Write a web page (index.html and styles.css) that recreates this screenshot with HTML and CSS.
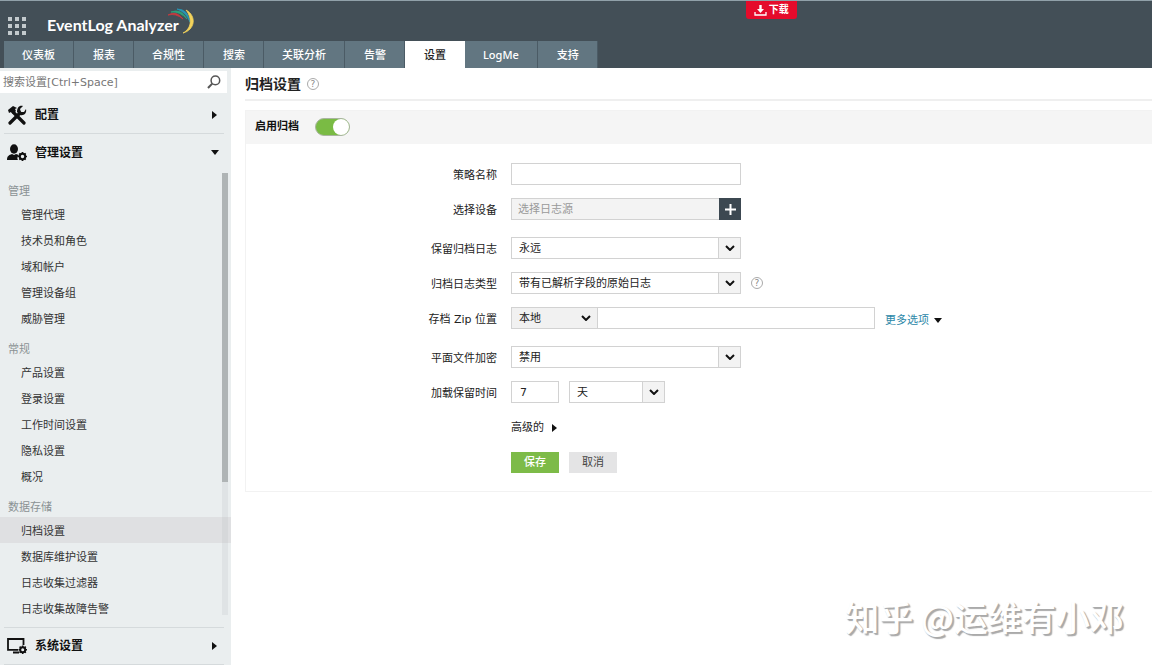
FILE: index.html
```html
<!DOCTYPE html>
<html lang="zh-CN">
<head>
<meta charset="utf-8">
<meta name="viewport" content="width=device-width, initial-scale=1">
<title>EventLog Analyzer - 归档设置</title>
<link rel="stylesheet" href="styles.css">
</head>
<body>
<header class="topbar">
  <div class="brand-row">
    <button class="apps" type="button" aria-label="Apps">
      <svg width="18" height="18" viewBox="0 0 18 18" fill="#c3cacd"><path d="M0 0h4v4H0zM7 0h4v4H7zM14 0h4v4h-4zM0 7h4v4H0zM7 7h4v4H7zM14 7h4v4h-4zM0 14h4v4H0zM7 14h4v4H7zM14 14h4v4h-4z"/></svg>
    </button>
    <a class="brand" href="#">EventLog Analyzer</a>
    <svg class="swoosh" width="30" height="28" viewBox="0 0 30 28" fill="none">
      <path d="M2 8Q10 3 17 12Q10 6 2 8Z" fill="#c93a3f" stroke="#c93a3f" stroke-width=".8"/>
      <path d="M5 5Q15 1 21 12Q14 4 5 5Z" fill="#2ba37c" stroke="#2ba37c" stroke-width=".8"/>
      <path d="M11 2Q22 2 24 15Q20 5 11 2Z" fill="#2795b5" stroke="#2795b5" stroke-width=".8"/>
      <path d="M20 3C31 9 29 23 17 26C25 22 27 12 20 3Z" fill="#f3d35b" stroke="#f3d35b" stroke-width=".8"/>
    </svg>
  </div>
  <nav class="tabs">
    <a class="long" href="#">仪表板</a><a href="#">报表</a><a class="long" href="#">合规性</a><a href="#">搜索</a><a class="long" href="#">关联分析</a><a href="#">告警</a><a class="current" href="#">设置</a><a class="long" href="#">LogMe</a><a href="#">支持</a>
  </nav>
  <button class="download" type="button">
    <svg width="13" height="11" viewBox="0 0 13 11" fill="none" stroke="#fff"><path d="M6.5 0v5" stroke-width="2.4"/><path d="M3 4h7L6.500 8z" fill="#fff" stroke="none"/><path d="M1 7v3h11V7" stroke-width="1.300"/></svg>下载
  </button>
</header>

<div class="page">
  <aside class="sidebar">
    <div class="search">
      <input type="search" placeholder="搜索设置[Ctrl+Space]" aria-label="搜索设置">
      <button type="button" aria-label="搜索"><svg width="14" height="14" viewBox="0 0 14 14" fill="none" stroke="#555"><circle cx="8.400" cy="5.400" r="4.300" stroke-width="1.500"/><path d="M5.200 8.600L1 13" stroke-width="2"/></svg></button>
    </div>
    <button class="section first" type="button">
      <svg width="20" height="20" viewBox="0 0 20 20" fill="none" stroke="#111"><path d="M6 7L17 18" stroke-width="3.200" stroke-linecap="round"/><path d="M1 5L6 1L10 3L8 4L9 6L6 9L4 7L2 8Z" fill="#111" stroke="none"/><path d="M3 18L13 8" stroke-width="3.200" stroke-linecap="round"/><path d="M16 1L13 4L14 7L17 7L19 4C20 8 17 11 13 10L10 7C10 3 12 0 16 1Z" fill="#111" stroke="none"/></svg>
      <span>配置</span><i class="tri right"></i>
    </button>
    <button class="section open" type="button">
      <svg width="20" height="18" viewBox="0 0 20 18" fill="#111"><ellipse cx="7" cy="5" rx="4" ry="4.700"/><path d="M0 16C0 12 2 11 5 10L7 11L9 10L12 11C10 13 10 15 11 16Z"/><circle cx="15.500" cy="12.500" r="2.700" fill="none" stroke="#111" stroke-width="2"/><path d="M15.500 8v2M15.500 15v2M11 12.500h2M18 12.500h2M12.300 9.300l1.400 1.400M17.300 14.300l1.400 1.400M18.700 9.300l-1.400 1.400M13.700 14.300l-1.400 1.400" stroke="#111" stroke-width="1.700"/></svg>
      <span>管理设置</span><i class="tri down"></i>
    </button>
    <nav class="menu">
      <h3>管理</h3>
      <a href="#">管理代理</a><a href="#">技术员和角色</a><a href="#">域和帐户</a><a href="#">管理设备组</a><a href="#">威胁管理</a>
      <h3>常规</h3>
      <a href="#">产品设置</a><a href="#">登录设置</a><a href="#">工作时间设置</a><a href="#">隐私设置</a><a href="#">概况</a>
      <h3>数据存储</h3>
      <a class="current" href="#">归档设置</a><a href="#">数据库维护设置</a><a href="#">日志收集过滤器</a><a href="#">日志收集故障告警</a>
      <div class="track"><div class="thumb"></div></div>
    </nav>
    <button class="section last" type="button">
      <svg width="20" height="18" viewBox="0 0 20 18" fill="none" stroke="#111"><path d="M11 12.800H1V2h15.500v6" stroke-width="1.800"/><path d="M6 15.500h6" stroke-width="2"/><circle cx="15.700" cy="12.700" r="2.500" stroke-width="2"/><path d="M15.700 8.500v2M15.700 15v2M11.500 12.700h2M18 12.700h2M12.600 9.600l1.400 1.400M17.400 14.400l1.400 1.400M18.800 9.600l-1.400 1.400M14 14.400l-1.400 1.400" stroke-width="1.600"/></svg>
      <span>系统设置</span><i class="tri right"></i>
    </button>
  </aside>

  <main class="content">
    <div class="heading">
      <h1>归档设置</h1>
      <button class="help" type="button" aria-label="帮助">?</button>
    </div>
    <section class="panel">
      <div class="panel-head">
        <label for="enable">启用归档</label>
        <input class="switch" id="enable" type="checkbox" checked>
      </div>
      <form class="form">
        <div class="row"><label for="policy">策略名称</label><input class="box wide" id="policy" type="text"></div>
        <div class="row spaced"><label for="device">选择设备</label>
          <div class="picker wide"><input id="device" type="text" placeholder="选择日志源" readonly><button type="button" aria-label="添加"><svg width="11" height="11" viewBox="0 0 11 11" stroke="#fff" stroke-width="2"><path d="M5.500 0v11M0 5.500h11"/></svg></button></div></div>
        <div class="row"><label for="keep">保留归档日志</label>
          <div class="pick wide"><select id="keep"><option>永远</option></select><span class="arrow"><svg width="10" height="6" viewBox="0 0 10 6"><path d="M1 1l4 4 4-4"/></svg></span></div></div>
        <div class="row"><label for="type">归档日志类型</label>
          <div class="pick wide"><select id="type"><option>带有已解析字段的原始日志</option></select><span class="arrow"><svg width="10" height="6" viewBox="0 0 10 6"><path d="M1 1l4 4 4-4"/></svg></span></div>
          <button class="help" type="button" aria-label="帮助">?</button></div>
        <div class="row spaced"><label for="place">存档 Zip 位置</label>
          <div class="location"><div class="pick plain"><select id="place"><option>本地</option></select><span class="arrow"><svg width="10" height="6" viewBox="0 0 10 6"><path d="M1 1l4 4 4-4"/></svg></span></div><input class="box" type="text" aria-label="存档路径"></div>
          <a class="more" href="#">更多选项<i class="tri down"></i></a></div>
        <div class="row"><label for="crypt">平面文件加密</label>
          <div class="pick wide"><select id="crypt"><option>禁用</option></select><span class="arrow"><svg width="10" height="6" viewBox="0 0 10 6"><path d="M1 1l4 4 4-4"/></svg></span></div></div>
        <div class="row"><label for="time">加载保留时间</label>
          <input class="box number" id="time" type="text" value="7">
          <div class="pick unit"><select aria-label="单位"><option>天</option></select><span class="arrow"><svg width="10" height="6" viewBox="0 0 10 6"><path d="M1 1l4 4 4-4"/></svg></span></div></div>
        <div class="row"><span></span><button class="advanced" type="button">高级的<i class="tri right"></i></button></div>
        <div class="row"><span></span><button class="action save" type="submit">保存</button><button class="action" type="button">取消</button></div>
      </form>
    </section>
  </main>
</div>
<div class="watermark">知乎 @运维有小邓</div>
</body>
</html>
```

FILE: styles.css
```css
* { box-sizing: border-box; }

body {
  margin: 0;
  background: #fff;
  color: #222;
  font: 11px/16px "DejaVu Sans", "Noto Sans CJK SC", sans-serif;
}

button, input, select {
  margin: 0;
  padding: 0;
  border: 0;
  border-radius: 0;
  background: none;
  color: inherit;
  font: inherit;
}

a { color: inherit; text-decoration: none; }
svg { display: block; flex: none; }

.topbar {
  position: relative;
  background: #434f57;
  border-top: 1px solid #91a1a9;
}

.brand-row {
  display: flex;
  align-items: center;
  height: 40px;
  padding: 8px 8px 0;
}

.brand {
  margin-left: 21px;
  color: #fff;
  font: bold 16px/24px Lato, sans-serif;
}

.apps svg { margin-top: 2px; }

.swoosh { margin: -8px 0 0 -13px; }

.tabs { display: flex; padding-left: 4px; }

.tabs a {
  padding: 6px 18px 5px 19px;
  border-right: 1px solid #4b5b65;
  background: #627681;
  color: #fff;
  font-family: "Noto Sans", "Noto Sans CJK SC", sans-serif;
  font-weight: 500;
}

.tabs .long { padding-left: 18px; }

.tabs .current {
  background: #fff;
  border-color: #fff;
  color: #222;
}

.download {
  position: absolute;
  top: 0;
  left: 65%;
  display: flex;
  align-items: center;
  gap: 2px;
  height: 18px;
  margin-left: -3px;
  padding: 0 8px;
  border-radius: 0 0 3px 3px;
  background: #e50b2b;
  color: #fff;
  font-size: 10px;
  font-weight: bold;
}

.page { display: flex; align-items: stretch; }

.sidebar {
  flex: 0 0 231px;
  padding-top: 3px;
  background: #eaeeef;
}

.search {
  display: flex;
  align-items: center;
  height: 22px;
  margin-right: 4px;
  padding: 0 6px 0 3px;
  background: #fff;
}

.search input { flex: 1; min-width: 0; padding-top: 2px; outline: 0; }
.search input::placeholder { color: #777; opacity: 1; }

.section {
  display: flex;
  align-items: center;
  gap: 8px;
  width: 220px;
  height: 41px;
  margin-left: 4px;
  padding: 0 5px 0 3px;
  border-bottom: 1px solid #d5dadc;
  color: #111;
  font-size: 12px;
  font-weight: bold;
  text-align: left;
}

.section span { flex: 1; }
.section.first { padding-top: 3px; }
.section.open { height: 39px; padding-bottom: 2px; border: 0; }
.section.last { height: 38px; border-top: 1px solid #d5dadc; }

.tri { display: block; flex: none; width: 0; height: 0; border: solid transparent; }
.tri.right { border-width: 4px 0 4px 5px; border-left-color: #111; margin-right: 2px; }
.tri.down { border-width: 5px 4px 0; border-top-color: #111; }

.menu { position: relative; padding-bottom: 6px; color: #333; }

.menu h3 {
  margin: 0;
  padding: 11px 8px 1px;
  color: #8b9294;
  font-size: 11px;
  font-weight: normal;
}

.menu a { display: block; padding: 7px 21px 3px; }
.menu .current { background: #dfe0e2; }

.track {
  position: absolute;
  top: 0;
  right: 3px;
  bottom: 12px;
  width: 6px;
  background: rgba(180, 184, 188, 0.2);
}

.thumb { height: 70%; background: #afb4b5; }

.content { flex: 1; min-width: 0; padding-left: 14px; }

.heading {
  display: flex;
  align-items: center;
  gap: 6px;
  height: 33px;
  border-bottom: 2px solid #efefef;
}

h1 { margin: 0; color: #222; font-size: 14px; line-height: 20px; font-weight: bold; }

.help {
  width: 12px;
  height: 12px;
  border: 1px solid #aaa;
  border-radius: 50%;
  color: #888;
  font-size: 9px;
  line-height: 10px;
  text-align: center;
}

.panel {
  margin-top: 9px;
  border: 1px solid #f2f2f2;
  border-right: 0;
}

.panel-head {
  display: flex;
  align-items: center;
  gap: 16px;
  height: 33px;
  padding: 0 9px 2px;
  background: #f5f5f5;
  color: #111;
  font-weight: bold;
}

.switch {
  appearance: none;
  display: flex;
  justify-content: flex-end;
  width: 35px;
  height: 18px;
  border: 1px solid #a9b5a0;
  border-radius: 9px;
  background: #7abb44;
}

.switch::before {
  content: "";
  width: 16px;
  height: 16px;
  border-radius: 8px;
  background: #fff;
}

.form {
  display: flex;
  flex-direction: column;
  gap: 13px;
  padding: 19px 0 18px;
}

.row {
  display: grid;
  grid-template-columns: 251px repeat(3, max-content);
  align-items: center;
  column-gap: 10px;
  min-height: 22px;
}

.row > :first-child { padding-top: 3px; text-align: right; }
.row > :first-child + * { margin-left: 4px; }
.row.spaced { margin-bottom: 4px; }

.wide { width: 230px; }

.box, .pick, .picker {
  height: 22px;
  border: 1px solid #d2d2d2;
  background: #fff;
}

.box { padding: 0 8px; }
.number { width: 48px; }

.picker { display: flex; background: #f3f3f3; }
.picker input { flex: 1; min-width: 0; padding: 2px 6px 0; }
.picker input::placeholder { color: #999; opacity: 1; }

.picker button {
  display: grid;
  place-items: center;
  width: 22px;
  height: 22px;
  margin: -1px -1px 0 0;
  background: #3c4851;
}

.pick { position: relative; }
.pick select { appearance: none; width: 100%; height: 20px; padding: 2px 24px 0 7px; }

.arrow {
  position: absolute;
  top: 0;
  right: 0;
  bottom: 0;
  display: grid;
  place-items: center;
  width: 22px;
  border-left: 1px solid #d2d2d2;
  background: #f3f3f3;
  pointer-events: none;
}

.arrow path { fill: none; stroke: #111; stroke-width: 2; }

.location { display: flex; width: 364px; }
.location .box { flex: 1; min-width: 0; border-left: 0; }
.plain { width: 87px; background: #f1f1f1; }
.plain .arrow { border: 0; background: none; }
.unit { width: 96px; }

.more { display: flex; align-items: center; gap: 5px; padding-top: 5px; color: #2b87a8; }

.advanced { display: flex; align-items: center; gap: 8px; padding-top: 2px; }

.action {
  width: 48px;
  height: 21px;
  padding-top: 2px;
  background: #e4e4e5;
  color: #444;
}

.save { background: #7dbb48; color: #fff; font-weight: 500; }

.watermark {
  position: absolute;
  right: 28px;
  bottom: 26px;
  color: #fff;
  font: 500 34px/44px "Noto Sans CJK SC", sans-serif;
  text-shadow: 1px 1px 1px #aaa, 2px 2px 1px #aaa;
  pointer-events: none;
}
```
